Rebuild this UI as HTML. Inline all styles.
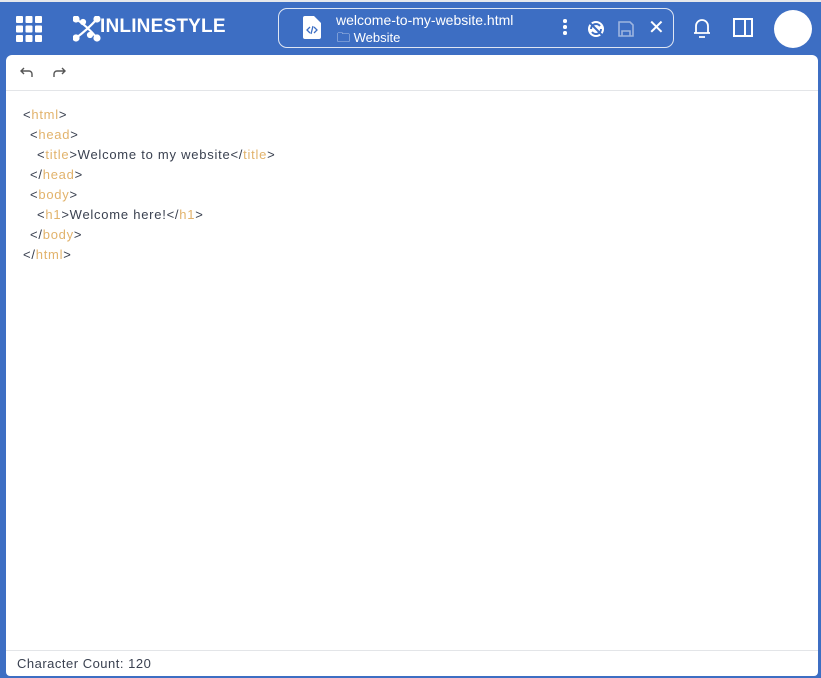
<!DOCTYPE html>
<html><head><style>
body{margin:0;width:821px;height:678px;background:#3d6ec3;font-family:"Liberation Sans",sans-serif;position:relative;overflow:hidden}
.top{position:absolute;left:0;top:0;width:821px;height:2px;background:#e6e8ec}
.panel{position:absolute;left:6px;top:55px;width:812px;height:621px;background:#fff;border-radius:6px 6px 4px 4px}
.tb{height:35px;border-bottom:1px solid #e3e5e8;position:relative}
.code{position:absolute;left:17px;top:50px;font-size:13px;line-height:20px;color:#3a4150;letter-spacing:0.75px}
.code div{white-space:pre}
.t{color:#e2b36c}
.foot{position:absolute;left:0;right:0;bottom:0;height:25px;border-top:1px solid #e3e5e8;font-size:13px;color:#3a4150;padding-left:11px;line-height:25px;letter-spacing:0.5px}
.file{position:absolute;left:278px;top:8px;width:396px;height:40px;border:1.5px solid #dfe6f3;border-radius:9px;box-sizing:border-box}
.w{color:#fff;position:absolute}
</style></head><body>
<div class="top"></div>
<svg class="w" style="left:16px;top:16px" width="26" height="26" viewBox="0 0 26 26" fill="#fff">
<rect x="0" y="0" width="7" height="7" rx="1"/><rect x="9.5" y="0" width="7" height="7" rx="1"/><rect x="19" y="0" width="7" height="7" rx="1"/>
<rect x="0" y="9.5" width="7" height="7" rx="1"/><rect x="9.5" y="9.5" width="7" height="7" rx="1"/><rect x="19" y="9.5" width="7" height="7" rx="1"/>
<rect x="0" y="19" width="7" height="7" rx="1"/><rect x="9.5" y="19" width="7" height="7" rx="1"/><rect x="19" y="19" width="7" height="7" rx="1"/></svg>
<svg class="w" style="left:73px;top:16px" width="28" height="26" viewBox="0 0 28 26" fill="none" stroke="#fff" stroke-width="2.2">
<circle cx="3" cy="3" r="2.5" fill="#fff"/><circle cx="3" cy="22" r="2.5" fill="#fff"/><circle cx="24" cy="3" r="2.5" fill="#fff"/><circle cx="24" cy="22" r="2.5" fill="#fff"/><circle cx="10" cy="6" r="2" fill="#fff"/><circle cx="17" cy="19" r="2" fill="#fff"/>
<path d="M3 3 Q14 10 24 22 M3 22 Q14 14 24 3"/></svg>
<div class="w" style="left:100px;top:16px;font-size:19px;font-weight:bold;letter-spacing:0.2px">INLINESTYLE</div>
<div class="file">
<svg class="w" style="left:24px;top:7px" width="18" height="23" viewBox="0 0 18 23"><path d="M0 2a2 2 0 0 1 2-2h9l7 7v14a2 2 0 0 1-2 2H2a2 2 0 0 1-2-2z" fill="#fff"/><path d="M7 11l-3 3 3 3M11 11l3 3-3 3M10 10l-2 8" stroke="#3d6ec3" stroke-width="1.3" fill="none"/></svg>
<div class="w" style="left:57px;top:3px;font-size:14px">welcome-to-my-website.html</div>
<div class="w" style="left:58px;top:20px;font-size:13px">🗀 Website</div>
<div class="w" style="left:284px;top:10px;width:4px"><div style="width:3.5px;height:3.5px;background:#fff;border-radius:50%;margin-bottom:2.5px"></div><div style="width:3.5px;height:3.5px;background:#fff;border-radius:50%;margin-bottom:2.5px"></div><div style="width:3.5px;height:3.5px;background:#fff;border-radius:50%"></div></div>
<svg class="w" style="left:308px;top:11px" width="18" height="18" viewBox="0 0 18 18"><circle cx="9" cy="9" r="8" fill="#fff"/><path d="M4 9a5 5 0 0 1 9-3M14 9a5 5 0 0 1-9 3M3 3l12 12" stroke="#3d6ec3" stroke-width="2" fill="none"/></svg>
<svg class="w" style="left:338px;top:11px" width="18" height="18" viewBox="0 0 18 18" fill="none" stroke="#9db5e0" stroke-width="1.6"><path d="M2 2h11l3 3v11H2z M5 16v-5h8v5"/></svg>
<div class="w" style="left:369px;top:6px;font-size:20px">✕</div>
</div>
<svg class="w" style="left:692px;top:17px" width="20" height="22" viewBox="0 0 20 22" fill="none" stroke="#fff" stroke-width="1.8"><path d="M4 16V9a6 6 0 0 1 12 0v7H2h16M7 20h6"/></svg>
<svg class="w" style="left:733px;top:18px" width="20" height="19" viewBox="0 0 20 19" fill="none" stroke="#fff" stroke-width="2"><rect x="1" y="1" width="18" height="17"/><path d="M12 1v17"/></svg>
<div style="position:absolute;left:774px;top:10px;width:38px;height:38px;border-radius:50%;background:#fff"></div>
<div class="panel">
<div class="tb">
<svg style="position:absolute;left:14px;top:12px" width="14" height="11" viewBox="0 0 14 11" fill="none" stroke="#555" stroke-width="1.4"><path d="M4 1L1 4l3 3M1 4h8a3 3 0 0 1 3 3v3"/></svg>
<svg style="position:absolute;left:46px;top:12px" width="14" height="11" viewBox="0 0 14 11" fill="none" stroke="#555" stroke-width="1.4"><path d="M10 1l3 3-3 3M13 4H5a3 3 0 0 0-3 3v3"/></svg>
</div>
<div class="code">
<div>&lt;<span class="t">html</span>&gt;</div>
<div style="padding-left:7px">&lt;<span class="t">head</span>&gt;</div>
<div style="padding-left:14px">&lt;<span class="t">title</span>&gt;Welcome to my website&lt;/<span class="t">title</span>&gt;</div>
<div style="padding-left:7px">&lt;/<span class="t">head</span>&gt;</div>
<div style="padding-left:7px">&lt;<span class="t">body</span>&gt;</div>
<div style="padding-left:14px">&lt;<span class="t">h1</span>&gt;Welcome here!&lt;/<span class="t">h1</span>&gt;</div>
<div style="padding-left:7px">&lt;/<span class="t">body</span>&gt;</div>
<div>&lt;/<span class="t">html</span>&gt;</div>
</div>
<div class="foot">Character Count: 120</div>
</div>
</body></html>
